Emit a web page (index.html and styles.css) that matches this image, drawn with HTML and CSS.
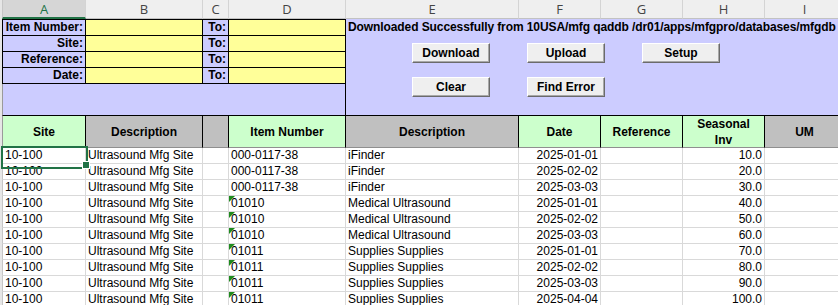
FILE: index.html
```html
<!DOCTYPE html>
<html lang="en">
<head>
    <meta charset="UTF-8">
    <title>Seasonal Inventory Upload</title>
    <link rel="stylesheet" href="styles.css">
</head>
<body>
    <div class="sheet">
        <!-- column letters -->
        <div class="col a sel">A</div>
        <div class="col">B</div>
        <div class="col">C</div>
        <div class="col">D</div>
        <div class="col">E</div>
        <div class="col">F</div>
        <div class="col">G</div>
        <div class="col">H</div>
        <div class="col">I</div>

        <!-- filter form -->
        <div class="c a lbl first">Item Number:</div>
        <div class="c inp first"></div>
        <div class="c lbl first">To:</div>
        <div class="c inp first"></div>

        <div class="panel">
            <p class="status">Downloaded Successfully from 10USA/mfg qaddb /dr01/apps/mfgpro/databases/mfgdb</p>
            <div class="actions">
                <button>Download</button>
                <button>Upload</button>
                <button>Setup</button>
                <button>Clear</button>
                <button>Find Error</button>
            </div>
        </div>

        <div class="c a lbl">Site:</div>
        <div class="c inp"></div>
        <div class="c lbl">To:</div>
        <div class="c inp"></div>

        <div class="c a lbl">Reference:</div>
        <div class="c inp"></div>
        <div class="c lbl">To:</div>
        <div class="c inp"></div>

        <div class="c a lbl">Date:</div>
        <div class="c inp"></div>
        <div class="c lbl">To:</div>
        <div class="c inp"></div>

        <div class="c a blank"></div>

        <!-- table header -->
        <div class="c a hd green">Site</div>
        <div class="c hd gray">Description</div>
        <div class="c hd gray"></div>
        <div class="c hd green">Item Number</div>
        <div class="c hd gray">Description</div>
        <div class="c hd green">Date</div>
        <div class="c hd green">Reference</div>
        <div class="c hd green">Seasonal<br>Inv</div>
        <div class="c hd gray">UM</div>

        <!-- rows -->
        <div class="c a active">10-100</div><div class="c">Ultrasound Mfg Site</div><div class="c"></div><div class="c">000-0117-38</div><div class="c">iFinder</div><div class="c r">2025-01-01</div><div class="c"></div><div class="c r">10.0</div><div class="c"></div>
        <div class="c a">10-100</div><div class="c">Ultrasound Mfg Site</div><div class="c"></div><div class="c">000-0117-38</div><div class="c">iFinder</div><div class="c r">2025-02-02</div><div class="c"></div><div class="c r">20.0</div><div class="c"></div>
        <div class="c a">10-100</div><div class="c">Ultrasound Mfg Site</div><div class="c"></div><div class="c">000-0117-38</div><div class="c">iFinder</div><div class="c r">2025-03-03</div><div class="c"></div><div class="c r">30.0</div><div class="c"></div>
        <div class="c a">10-100</div><div class="c">Ultrasound Mfg Site</div><div class="c"></div><div class="c txt">01010</div><div class="c">Medical Ultrasound</div><div class="c r">2025-01-01</div><div class="c"></div><div class="c r">40.0</div><div class="c"></div>
        <div class="c a">10-100</div><div class="c">Ultrasound Mfg Site</div><div class="c"></div><div class="c txt">01010</div><div class="c">Medical Ultrasound</div><div class="c r">2025-02-02</div><div class="c"></div><div class="c r">50.0</div><div class="c"></div>
        <div class="c a">10-100</div><div class="c">Ultrasound Mfg Site</div><div class="c"></div><div class="c txt">01010</div><div class="c">Medical Ultrasound</div><div class="c r">2025-03-03</div><div class="c"></div><div class="c r">60.0</div><div class="c"></div>
        <div class="c a">10-100</div><div class="c">Ultrasound Mfg Site</div><div class="c"></div><div class="c txt">01011</div><div class="c">Supplies Supplies</div><div class="c r">2025-01-01</div><div class="c"></div><div class="c r">70.0</div><div class="c"></div>
        <div class="c a">10-100</div><div class="c">Ultrasound Mfg Site</div><div class="c"></div><div class="c txt">01011</div><div class="c">Supplies Supplies</div><div class="c r">2025-02-02</div><div class="c"></div><div class="c r">80.0</div><div class="c"></div>
        <div class="c a">10-100</div><div class="c">Ultrasound Mfg Site</div><div class="c"></div><div class="c txt">01011</div><div class="c">Supplies Supplies</div><div class="c r">2025-03-03</div><div class="c"></div><div class="c r">90.0</div><div class="c"></div>
        <div class="c a">10-100</div><div class="c">Ultrasound Mfg Site</div><div class="c"></div><div class="c txt">01011</div><div class="c">Supplies Supplies</div><div class="c r">2025-04-04</div><div class="c"></div><div class="c r">100.0</div><div class="c"></div>
    </div>
</body>
</html>
```

FILE: styles.css
```css
* {
    margin: 0;
    padding: 0;
    box-sizing: border-box;
}

body {
    font-family: "Liberation Sans", Arial, sans-serif;
    font-size: 12px;
    color: #000;
    background: #fff;
    overflow: hidden;
}

/* Worksheet grid */
.sheet {
    display: grid;
    grid-template-columns: 84px 117px 26px 117px 173px 82px 82px 82px 80px;
    grid-template-rows: 19px 17px 16px 16px 16px 32px 32px;
    grid-auto-rows: 16px;
    width: max-content;
    border-left: 2px solid #e6e6e6;
}

.c {
    border-right: 1px solid #d9d9d9;
    border-bottom: 1px solid #d9d9d9;
    padding: 0 2px;
    line-height: 15px;
    white-space: nowrap;
    overflow: hidden;
}

.a {
    border-left: 1px solid #c6c6c6;
}

.r {
    text-align: right;
}

/* Column letters */
.col {
    background: #efefef;
    border-right: 1px solid #d4d4d4;
    border-bottom: 1px solid #c2c2c2;
    font-family: "Open Sans", "Noto Sans", sans-serif;
    font-size: 13px;
    line-height: 18px;
    color: #444;
    text-align: center;
}

.col.sel {
    background: #d6d6d6;
    color: #217346;
    border-bottom: 2px solid #217346;
}

/* Filter form */
.lbl {
    background: #ccccff;
    font-weight: bold;
    text-align: right;
    border-color: #000;
}

.inp {
    background: #ffff99;
    border-color: #000;
}

.first {
    border-top: 1px solid #000;
}

.blank {
    grid-column: 1 / 5;
    background: #ccccff;
    border-right: 1px solid #000;
    border-bottom: 1px solid #000;
    border-left-color: #9a9a9a;
}

.panel {
    grid-column: 5 / 10;
    grid-row: 2 / 7;
    background: #ccccff;
    border-bottom: 1px solid #000;
    overflow: hidden;
}

.status {
    font-weight: bold;
    white-space: nowrap;
    line-height: 16px;
    letter-spacing: -0.09px;
    padding: 0 2px;
}

.actions {
    display: grid;
    grid-template-columns: repeat(3, 78px);
    column-gap: 37px;
    row-gap: 14px;
    padding-left: 66px;
    margin-top: 8px;
}

.actions button {
    height: 20px;
    font-family: "Liberation Sans", Arial, sans-serif;
    font-size: 12px;
    font-weight: bold;
    color: #000;
    background: #efefef;
    border: 1px solid;
    border-color: #fff #6b6b6b #6b6b6b #fff;
    box-shadow: inset -1px -1px #a8a8a8;
}

/* Table header */
.hd {
    display: flex;
    align-items: center;
    justify-content: center;
    text-align: center;
    white-space: normal;
    font-weight: bold;
    line-height: 16px;
    border-right-color: #000;
    border-bottom-color: #8f8f8f;
}

.hd.a {
    border-left-color: #9a9a9a;
}

.green {
    background: #ccffcc;
}

.gray {
    background: #c0c0c0;
}

/* Number stored as text marker */
.txt {
    position: relative;
}

.txt::before {
    content: "";
    position: absolute;
    top: 0;
    left: 0;
    border-top: 6px solid #1e8a1e;
    border-right: 6px solid transparent;
}

/* Active cell */
.active {
    position: relative;
    overflow: visible;
}

.active::before {
    content: "";
    position: absolute;
    left: -2px;
    top: -2px;
    width: 83px;
    height: 19px;
    border: 2px solid #217346;
    z-index: 1;
}

.active::after {
    content: "";
    position: absolute;
    left: 79px;
    top: 13px;
    width: 6px;
    height: 6px;
    background: #217346;
    border: 1px solid #fff;
    z-index: 2;
}
```
